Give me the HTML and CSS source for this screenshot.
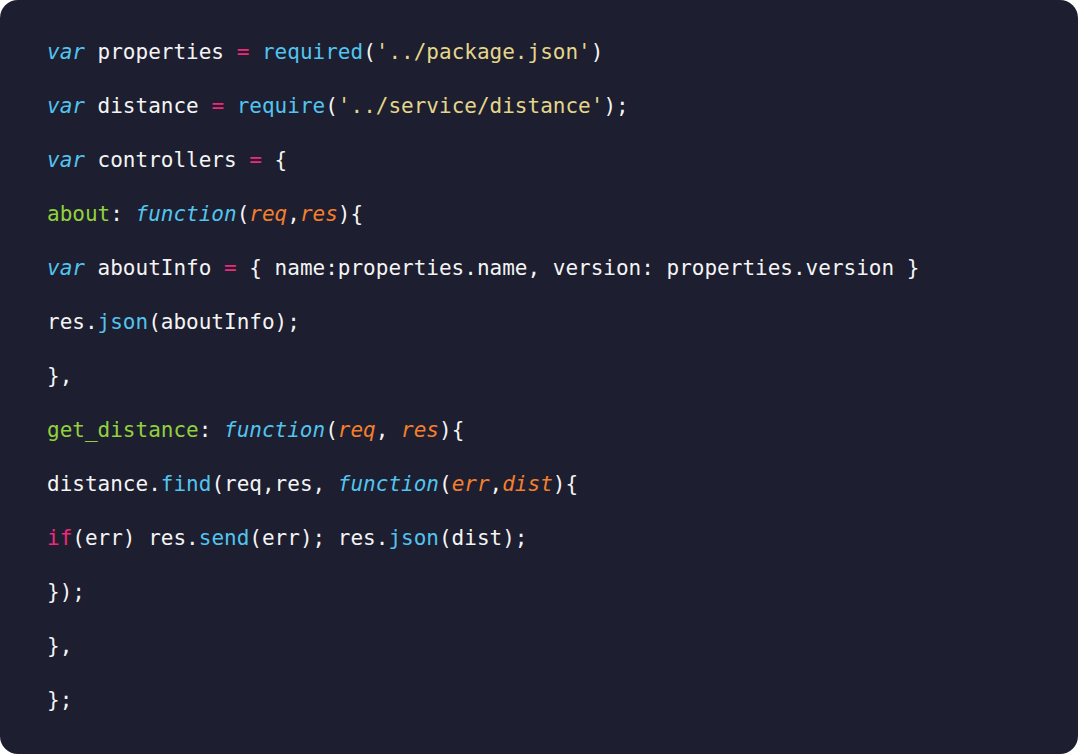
FILE: index.html
```html
<!DOCTYPE html>
<html>
<head>
<meta charset="utf-8">
<link rel="stylesheet" href="styles.css">
</head>
<body>
<div class="code">
<div class="line"><span class="kw">var</span> properties <span class="op">=</span> <span class="fn">required</span>(<span class="str">'../package.json'</span>)</div>
<div class="line"><span class="kw">var</span> distance <span class="op">=</span> <span class="fn">require</span>(<span class="str">'../service/distance'</span>);</div>
<div class="line"><span class="kw">var</span> controllers <span class="op">=</span> {</div>
<div class="line"><span class="key">about</span>: <span class="kw">function</span>(<span class="param">req</span>,<span class="param">res</span>){</div>
<div class="line"><span class="kw">var</span> aboutInfo <span class="op">=</span> { name:properties.name, version: properties.version }</div>
<div class="line">res.<span class="fn">json</span>(aboutInfo);</div>
<div class="line">},</div>
<div class="line"><span class="key">get_distance</span>: <span class="kw">function</span>(<span class="param">req</span>, <span class="param">res</span>){</div>
<div class="line">distance.<span class="fn">find</span>(req,res, <span class="kw">function</span>(<span class="param">err</span>,<span class="param">dist</span>){</div>
<div class="line"><span class="op">if</span>(err) res.<span class="fn">send</span>(err); res.<span class="fn">json</span>(dist);</div>
<div class="line">});</div>
<div class="line">},</div>
<div class="line">};</div>
</div>
</body>
</html>
```
FILE: styles.css
```css
html, body {
  margin: 0;
  padding: 0;
  background: #ffffff;
}
.code {
  box-sizing: border-box;
  width: 1078px;
  height: 754px;
  background: #1d1e30;
  border-radius: 18px;
  padding: 25px 0 0 47px;
  font-family: "DejaVu Sans Mono", "Liberation Mono", monospace;
  font-size: 21px;
  color: #f4f4f4;
}
.line {
  height: 54px;
  line-height: 54px;
  white-space: pre;
}
.kw { color: #52c4ee; font-style: italic; }
.fn { color: #52c4ee; }
.op { color: #f0287a; }
.str { color: #e4d68a; }
.key { color: #92d13c; }
.param { color: #f57f2c; font-style: italic; }
```
